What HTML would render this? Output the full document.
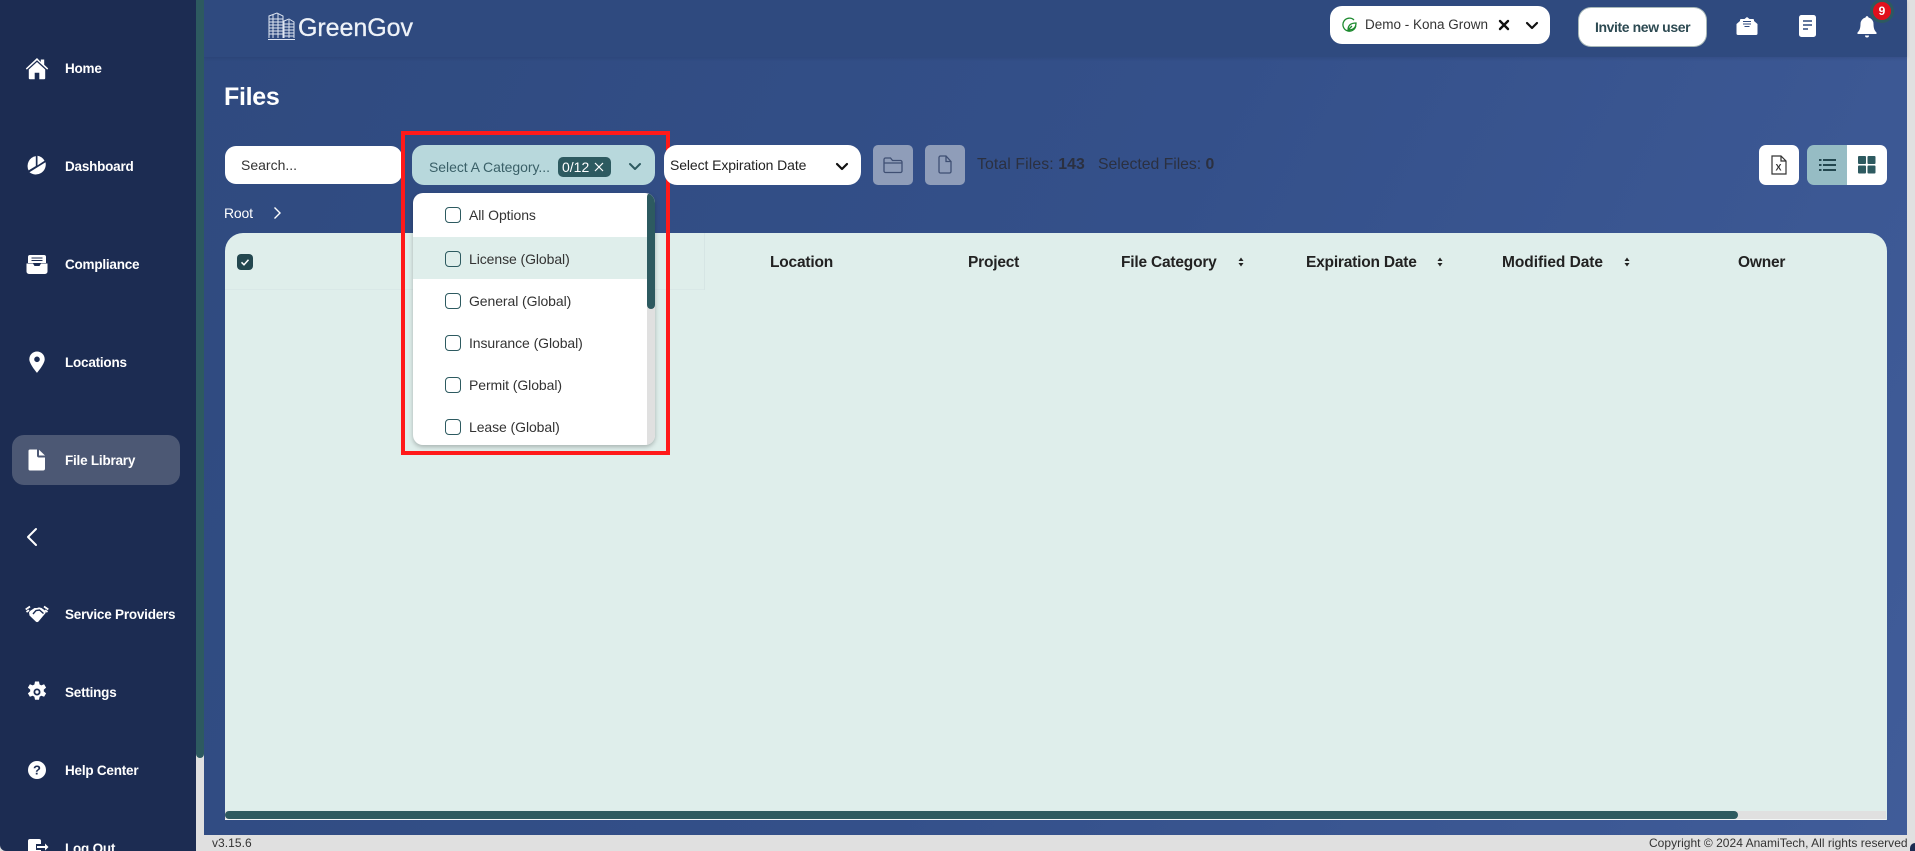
<!DOCTYPE html>
<html><head><meta charset="utf-8"><style>
html,body{margin:0;padding:0;width:1915px;height:851px;overflow:hidden;background:#e0e0e0;font-family:"Liberation Sans",sans-serif}
#r{position:relative;width:1915px;height:851px;overflow:hidden;background:#e0e0e0}
.a{position:absolute;white-space:nowrap;line-height:20px}
svg{position:absolute;display:block}
.nav{left:65px;color:#fff;font-size:13.5px;font-weight:bold;letter-spacing:-.22px}
.th{top:252.5px;color:#222;font-size:15.5px;font-weight:bold;letter-spacing:-.2px}
.opt{left:469px;color:#333;font-size:14px;letter-spacing:-.08px}
.cb{position:absolute;left:445px;width:14px;height:14px;border:1.5px solid #2d5a60;border-radius:4px;background:#fff}
.btn{position:absolute;background:#fff;border-radius:10px}
</style></head><body><div id="r">
<div style="position:absolute;left:204px;top:0;width:1703px;height:835px;background:linear-gradient(115deg,#2f4a7f 0%,#34508a 50%,#405c99 100%)"></div>
<div style="position:absolute;left:204px;top:0;width:1703px;height:57px;background:#2f4a7f;box-shadow:0 1px 3px rgba(20,30,60,.15)"></div>
<div style="position:absolute;left:0;top:0;width:196px;height:851px;background:#1c2c52;border-bottom-left-radius:6px"></div>
<div style="position:absolute;left:196px;top:0;width:8px;height:758px;background:#2d5a60;border-radius:0 0 4px 4px"></div>
<div style="position:absolute;left:12px;top:435px;width:168px;height:50px;background:#4c5874;border-radius:12px"></div>

<svg style="left:25px;top:57px" width="24" height="23" viewBox="0 0 24 23" fill="#fff"><path d="M12 1L.8 11.500l1 1.100L12 3.300l10.200 9.300 1-1.100-4-3.700V2.500h-3.400v2.500z"/><path d="M12 5L3.800 12.500v8.700a1 1 0 0 0 1 1h4.900v-6.500h4.600v6.500h4.900a1 1 0 0 0 1-1v-8.700z"/></svg>
<div class="a nav" style="top:59px">Home</div>
<svg style="left:26px;top:155px" width="22" height="22" viewBox="0 0 22 22" fill="#fff"><path d="M9.800 1.100A10 10 0 0 0 2.600 15.400L9.800 11z"/><path d="M11.500 .8V10.400l7-4.600A10 10 0 0 0 11.500 .8z"/><path d="M19.500 7.300L3.500 17.300A10 10 0 0 0 19.500 7.300z"/></svg>
<div class="a nav" style="top:157px">Dashboard</div>
<svg style="left:26px;top:255px" width="22" height="19" viewBox="0 0 22 19" fill="#fff"><path d="M4 0h14a2 2 0 0 1 2 2v6H2V2a2 2 0 0 1 2-2z"/><path d="M.5 8.500h6.500l1.500 2.500h5L15 8.500h6.500v8a2.500 2.500 0 0 1-2.500 2.500H3a2.500 2.500 0 0 1-2.500-2.500z"/><path d="M5.500 3h11M5.500 5.500h11M8 9.200h6" stroke="#1c2c52" stroke-width="1"/></svg>
<div class="a nav" style="top:255px">Compliance</div>
<svg style="left:29px;top:351px" width="16" height="22" viewBox="0 0 16 22"><path fill="#fff" fill-rule="evenodd" d="M8 .5a7.700 7.700 0 0 0-7.700 7.700C.3 13 8 21.800 8 21.800S15.700 13 15.700 8.200A7.700 7.700 0 0 0 8 .5zm0 5a2.800 2.800 0 1 1 0 5.600 2.800 2.800 0 0 1 0-5.600z"/></svg>
<div class="a nav" style="top:353px">Locations</div>
<svg style="left:28px;top:449px" width="18" height="22" viewBox="0 0 18 22" fill="#fff"><path d="M2 .5h7v6a2 2 0 0 0 2 2h6v11a2 2 0 0 1-2 2H2a1.500 1.500 0 0 1-1.500-1.500V2A1.500 1.500 0 0 1 2 .5z"/><path d="M11 .8l6 5.700h-6z"/></svg>
<div class="a nav" style="top:451px">File Library</div>
<svg style="left:25px;top:527px" width="14" height="20" viewBox="0 0 14 20"><path d="M11 2L3 10l8 8" fill="none" stroke="#fff" stroke-width="2" stroke-linecap="round" stroke-linejoin="round"/></svg>
<svg style="left:25px;top:605px" width="24" height="18" viewBox="0 0 24 18"><path fill="#fff" d="M5 6L9.500 3H12l2-.6 2.500.6L20 5.500l.8 2.200-7.300 8.800c-.8.800-1.800.8-2.500.3L4.500 10.500 4 7.500z"/><path d="M8 9l3-3.500 3.500-.5 4 3.500" fill="none" stroke="#1c2c52" stroke-width="1.400"/><path d="M.7 4.500L5 1.500M1.500 7L4 5.200M23.300 4.500L19 1.500M22.500 7L20 5.200" stroke="#fff" stroke-width="1.800"/></svg>
<div class="a nav" style="top:605px">Service Providers</div>
<svg style="left:26px;top:681px" width="22" height="22" viewBox="0 0 22 22"><path fill="#fff" fill-rule="evenodd" d="M9 .5h4l.6 3 1.700.9 2.800-1.200 2 3.400-2.300 2v1.800l2.300 2-2 3.400-2.800-1.100-1.700 1-.6 3h-4l-.6-3-1.700-1-2.800 1.100-2-3.400 2.300-2V8.600L1.900 6.600l2-3.400 2.800 1.200 1.700-.9zM11 7.500a3.500 3.500 0 1 0 0 7 3.500 3.500 0 0 0 0-7zm0 1.800a1.700 1.700 0 1 1 0 3.400 1.700 1.700 0 0 1 0-3.400z"/></svg>
<div class="a nav" style="top:683px">Settings</div>
<svg style="left:28px;top:761px" width="18" height="18" viewBox="0 0 18 18"><circle cx="9" cy="9" r="9" fill="#fff"/><text x="9" y="13.500" text-anchor="middle" font-family="Liberation Sans" font-weight="bold" font-size="13" fill="#1c2c52">?</text></svg>
<div class="a nav" style="top:761px">Help Center</div>
<svg style="left:27px;top:838px" width="22" height="18" viewBox="0 0 22 18" fill="#fff"><path d="M3 1h9a2 2 0 0 1 2 2v3H9v6h5v3a2 2 0 0 1-2 2H3a2 2 0 0 1-2-2V3a2 2 0 0 1 2-2z"/><path d="M10 8h8V5.500L21.500 9 18 12.500V10h-8z"/></svg>
<div class="a nav" style="top:839px">Log Out</div>

<svg style="left:267px;top:11px" width="28" height="30" viewBox="0 0 28 30" fill="none" stroke="#dfe6f2" stroke-width="1"><path d="M2 27V5l8-3 6 3v22M17 27V10l5-2 5 3v16" /><path d="M2 8h14M2 11h14M2 14h14M2 17h14M2 20h14M2 23h14M17 13h10M17 16h10M17 19h10M17 22h10M17 25h10M1 28.500h27M6 4v23M11 3v24M22 9v18"/></svg>
<div class="a" style="left:298px;top:14px;line-height:28px;color:#eef2f8;font-size:25px;letter-spacing:-.05px;-webkit-text-stroke:.3px #eef2f8">GreenGov</div>

<div class="btn" style="left:1330px;top:6px;width:220px;height:38px;border-radius:12px"></div>
<svg style="left:1342px;top:17px" width="15" height="16" viewBox="0 0 15 16" fill="none" stroke="#1d8a2f" stroke-width="1.300"><path d="M12 3A6.500 6.500 0 1 0 13.800 9"/><path d="M6 13C6 8 9 6 14 6c0 5-3 7-8 7zM6 13l4-4"/></svg>
<div class="a" style="left:1365px;top:15px;color:#333;font-size:13.500px;letter-spacing:0">Demo - Kona Grown</div>
<svg style="left:1498px;top:19px" width="12" height="12" viewBox="0 0 12 12"><path d="M2 2l8 8M10 2l-8 8" stroke="#111" stroke-width="2.400" stroke-linecap="round"/></svg>
<svg style="left:1525px;top:21px" width="14" height="9" viewBox="0 0 14 9"><path d="M2 2l5 5 5-5" fill="none" stroke="#111" stroke-width="2.200" stroke-linecap="round" stroke-linejoin="round"/></svg>

<div class="btn" style="left:1579px;top:8px;width:127px;height:38px;border-radius:12px;box-shadow:0 0 0 1px #a8b8b8"></div>
<div class="a" style="left:1595px;top:17px;color:#2d4a52;font-size:14px;font-weight:bold;letter-spacing:-.4px">Invite new user</div>
<svg style="left:1736px;top:16px" width="22" height="20" viewBox="0 0 22 20"><path fill="#fff" d="M.5 8L4 5V4a1 1 0 0 1 1-1h3.500L11 1l2.500 2H17a1 1 0 0 1 1 1v1l3.500 3v9.500a1.500 1.500 0 0 1-1.500 1.500H2a1.500 1.500 0 0 1-1.500-1.500z"/><path d="M7 5.500h8M7 8h8M8.500 10.500h5" stroke="#2f4a7f" stroke-width="1.100"/></svg>
<svg style="left:1799px;top:15px" width="17" height="22" viewBox="0 0 17 22"><rect x="0" y="0" width="17" height="22" rx="2.500" fill="#fff"/><path d="M4 6h9M4 10h9M4 14h5" stroke="#2f4a7f" stroke-width="1.500"/></svg>
<svg style="left:1857px;top:15px" width="20" height="24" viewBox="0 0 20 24" fill="#fff"><path d="M10 1a2 2 0 0 1 1.500 1.500A6.500 6.500 0 0 1 16.500 9c0 5 1.500 7 3 8.500v1.500H.5v-1.500C2 16 3.500 14 3.500 9a6.500 6.500 0 0 1 5-6.500A2 2 0 0 1 10 1z"/><path d="M8 20.500h4a2 2 0 0 1-4 0z"/></svg>
<div class="a" style="left:1870px;top:-1px;width:18px;height:18px;line-height:18px;border:3px solid #2d5a60;border-radius:50%;background:#e0101c;color:#fff;font-size:12px;font-weight:bold;text-align:center">9</div>

<div class="a" style="left:224px;top:81px;line-height:32px;color:#fff;font-size:25px;font-weight:bold;letter-spacing:-.3px">Files</div>

<div class="btn" style="left:225px;top:146px;width:177px;height:38px;border-radius:11px"></div>
<div class="a" style="left:241px;top:155px;color:#333;font-size:14px">Search...</div>

<div style="position:absolute;left:412px;top:145px;width:243px;height:40px;background:#b8d8dc;border-radius:12px"></div>
<div class="a" style="left:429px;top:157px;color:#3a6068;font-size:14px;letter-spacing:-.05px">Select A Category...</div>
<div class="a" style="left:558px;top:157px;width:53px;height:20px;background:#2d5a60;border-radius:5px;color:#fff;font-size:14px;text-indent:4px">0/12</div>
<svg style="left:593px;top:161px" width="12" height="12" viewBox="0 0 12 12"><path d="M2 2l8 8M10 2l-8 8" stroke="#fff" stroke-width="1.200"/></svg>
<svg style="left:628px;top:162px" width="14" height="9" viewBox="0 0 14 9"><path d="M2 2l5 5 5-5" fill="none" stroke="#2d5a60" stroke-width="2" stroke-linecap="round" stroke-linejoin="round"/></svg>

<div style="position:absolute;left:225px;top:233px;width:1662px;height:587px;background:#dfeeeb;border-radius:18px 18px 0 0"></div>
<div style="position:absolute;left:225px;top:289px;width:480px;height:1px;background:#d9e8e7"></div>
<div style="position:absolute;left:704px;top:233px;width:1px;height:57px;background:#d6e5e4"></div>
<div style="position:absolute;left:237px;top:254px;width:16px;height:16px;background:#23474f;border-radius:4px"></div>
<svg style="left:239px;top:256px" width="12" height="12" viewBox="0 0 12 12"><path d="M2.500 6.300l2.500 2.500 4.500-5" fill="none" stroke="#fff" stroke-width="1.500"/></svg>
<div class="a th" style="left:770px">Location</div>
<div class="a th" style="left:968px">Project</div>
<div class="a th" style="left:1121px">File Category</div>
<div class="a th" style="left:1306px">Expiration Date</div>
<div class="a th" style="left:1502px;letter-spacing:-.05px">Modified Date</div>
<div class="a th" style="left:1738px">Owner</div>
<svg style="left:1238px;top:257px" width="6" height="10" viewBox="0 0 6 10" fill="#222"><path d="M3 .5l2.500 3.500h-5zM3 9.500L.5 6h5z"/></svg>
<svg style="left:1437px;top:257px" width="6" height="10" viewBox="0 0 6 10" fill="#222"><path d="M3 .5l2.500 3.500h-5zM3 9.500L.5 6h5z"/></svg>
<svg style="left:1624px;top:257px" width="6" height="10" viewBox="0 0 6 10" fill="#222"><path d="M3 .5l2.500 3.500h-5zM3 9.500L.5 6h5z"/></svg>
<div style="position:absolute;left:225px;top:811px;width:1661px;height:8px;background:#e0e0e0"></div>
<div style="position:absolute;left:225px;top:811px;width:1513px;height:8px;background:#2d5a60;border-radius:4px"></div>
<div style="position:absolute;left:225px;top:819px;width:1661px;height:1px;background:#f2f6f6"></div>

<div style="position:absolute;left:413px;top:193px;width:242px;height:252px;background:#fff;border-radius:10px;box-shadow:0 2px 5px rgba(0,0,0,.25);overflow:hidden">
  <div style="position:absolute;left:0;top:44px;width:234px;height:42px;background:#dfeeeb"></div>
  <div style="position:absolute;left:234px;top:0;width:8px;height:252px;background:#e0e0e0"></div>
  <div style="position:absolute;left:234px;top:0;width:8px;height:116px;background:#2d5a60;border-radius:4px"></div>
</div>
<div class="cb" style="top:207px"></div><div class="a opt" style="top:205px">All Options</div>
<div class="cb" style="top:251px;background:transparent"></div><div class="a opt" style="top:249px">License (Global)</div>
<div class="cb" style="top:293px"></div><div class="a opt" style="top:291px">General (Global)</div>
<div class="cb" style="top:335px"></div><div class="a opt" style="top:333px">Insurance (Global)</div>
<div class="cb" style="top:377px"></div><div class="a opt" style="top:375px">Permit (Global)</div>
<div class="cb" style="top:419px"></div><div class="a opt" style="top:417px">Lease (Global)</div>

<div style="position:absolute;left:401px;top:131px;width:261px;height:316px;border:4px solid #ff1a1a"></div>

<div class="btn" style="left:664px;top:145px;width:197px;height:40px;border-radius:13px"></div>
<div class="a" style="left:670px;top:155px;color:#222;font-size:14px;letter-spacing:-.1px">Select Expiration Date</div>
<svg style="left:835px;top:162px" width="14" height="9" viewBox="0 0 14 9"><path d="M2 2l5 5 5-5" fill="none" stroke="#111" stroke-width="2.200" stroke-linecap="round" stroke-linejoin="round"/></svg>

<div style="position:absolute;left:873px;top:145px;width:40px;height:40px;background:#8f9db9;border-radius:5px"></div>
<svg style="left:883px;top:156px" width="20" height="18" viewBox="0 0 20 18" fill="none" stroke="#3f4f73" stroke-width="1.300"><path d="M1 3.500a1.500 1.500 0 0 1 1.500-1.500h5l2 2.500h8a1.500 1.500 0 0 1 1.500 1.500v9a1.500 1.500 0 0 1-1.500 1.500h-15A1.500 1.500 0 0 1 1 15zM1 7h18"/></svg>
<div style="position:absolute;left:925px;top:145px;width:40px;height:40px;background:#8f9db9;border-radius:5px"></div>
<svg style="left:938px;top:155px" width="14" height="19" viewBox="0 0 14 19" fill="none" stroke="#3f4f73" stroke-width="1.300"><path d="M1 2.500A1.500 1.500 0 0 1 2.500 1H8l5 5.500V16.500a1.500 1.500 0 0 1-1.500 1.500h-9A1.500 1.500 0 0 1 1 16.500zM8 1v5.500h5"/></svg>
<div class="a" style="left:977px;top:155px;color:#2b3040;font-size:15.800px;letter-spacing:.1px">Total Files: <b>143</b></div>
<div class="a" style="left:1098px;top:155px;color:#2b3040;font-size:15.800px;letter-spacing:-.03px">Selected Files: <b>0</b></div>

<div class="btn" style="left:1759px;top:145px;width:40px;height:40px;border-radius:7px"></div>
<svg style="left:1771px;top:155px" width="16" height="20" viewBox="0 0 16 20" fill="none" stroke="#333" stroke-width="1.200"><path d="M1 1h9l5 5v13H1zM10 1v5h5"/><text x="7.500" y="15.500" text-anchor="middle" font-family="Liberation Sans" font-size="9" font-weight="bold" fill="#333" stroke="none">X</text></svg>
<div style="position:absolute;left:1807px;top:145px;width:40px;height:40px;background:#96bcc4;border-radius:7px 0 0 7px"></div>
<div style="position:absolute;left:1847px;top:145px;width:40px;height:40px;background:#fff;border-radius:0 7px 7px 0"></div>
<svg style="left:1819px;top:158px" width="17" height="14" viewBox="0 0 17 14" fill="#23474f"><path d="M0 1h2.500v2H0zM0 6h2.500v2H0zM0 11h2.500v2H0zM4 1h13v2H4zM4 6h13v2H4zM4 11h13v2H4z"/></svg>
<svg style="left:1858px;top:156px" width="18" height="18" viewBox="0 0 18 18" fill="#2d5a60"><rect width="8" height="8" rx="1"/><rect x="9.500" width="8" height="8" rx="1"/><rect y="9.500" width="8" height="8" rx="1"/><rect x="9.500" y="9.500" width="8" height="8" rx="1"/></svg>

<div class="a" style="left:224px;top:203px;color:#fff;font-size:14px;letter-spacing:-.2px">Root</div>
<svg style="left:272px;top:206px" width="10" height="14" viewBox="0 0 10 14"><path d="M2.500 1.500L8 7l-5.500 5.500" fill="none" stroke="#fff" stroke-width="1.400"/></svg>

<div class="a" style="left:212px;top:834px;height:17px;line-height:18px;color:#333;font-size:12px;letter-spacing:.05px">v3.15.6</div>
<div class="a" style="left:1649px;top:834px;height:17px;line-height:18px;color:#333;font-size:12px;letter-spacing:.02px">Copyright © 2024 AnamiTech, All rights reserved</div>
<div style="position:absolute;left:1910px;top:843px;width:5px;height:8px;background:#1c2c52;border-radius:5px 0 0 0"></div>
</div></body></html>
